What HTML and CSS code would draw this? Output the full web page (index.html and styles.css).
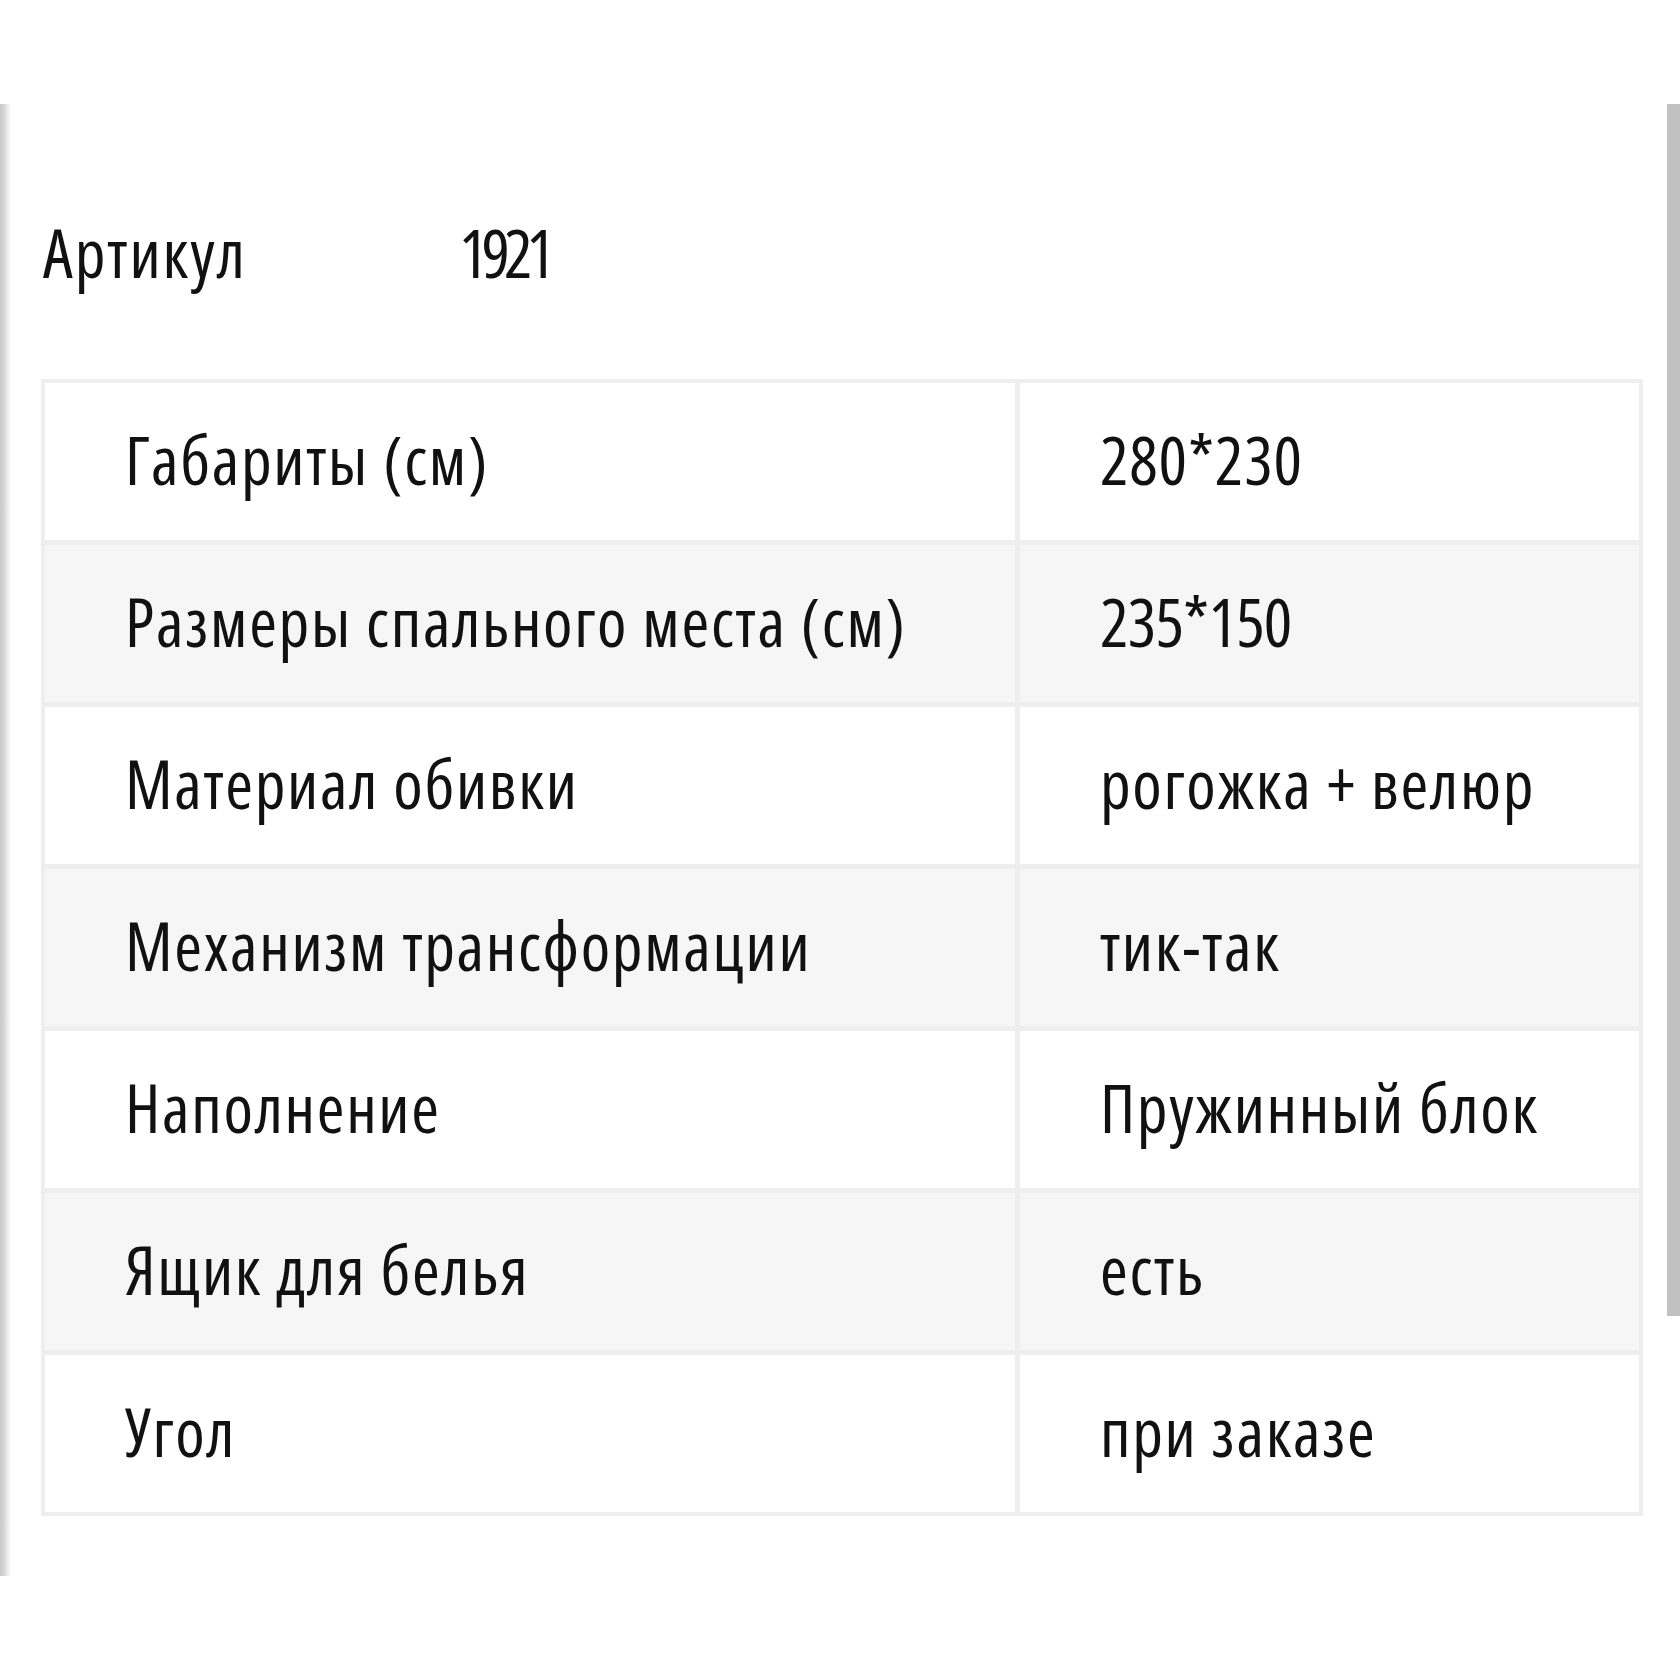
FILE: index.html
```html
<!DOCTYPE html>
<html lang="ru">
<head>
<meta charset="utf-8">
<title>Характеристики</title>
<link rel="stylesheet" href="styles.css">
</head>
<body>
<div class="edge-shadow"></div>
<div class="scrollbar"></div>
<main class="page">
  <div class="sku">
    <span class="sku-label">Артикул</span>
    <span class="sku-value">1921</span>
  </div>
  <div class="specs">
    <div class="cell">Габариты (см)</div>
    <div class="cell num">280*230</div>
    <div class="cell alt">Размеры спального места (см)</div>
    <div class="cell alt num tight">235*150</div>
    <div class="cell">Материал обивки</div>
    <div class="cell">рогожка + велюр</div>
    <div class="cell alt">Механизм трансформации</div>
    <div class="cell alt">тик-так</div>
    <div class="cell">Наполнение</div>
    <div class="cell">Пружинный блок</div>
    <div class="cell alt">Ящик для белья</div>
    <div class="cell alt">есть</div>
    <div class="cell">Угол</div>
    <div class="cell">при заказе</div>
  </div>
</main>
</body>
</html>
```
FILE: styles.css
```css
html, body {
  margin: 0;
  padding: 0;
  background: #ffffff;
}

body {
  font-family: "Open Sans", "Noto Sans", "Liberation Sans", sans-serif;
  font-stretch: 75%;
  font-weight: 500;
  font-size: 67px;
  letter-spacing: 1.7px;
  color: #111111;
}

.edge-shadow {
  position: absolute;
  left: 0;
  top: 104px;
  width: 11px;
  height: 1472px;
  background: linear-gradient(to right, #c9c9c9 0%, #d6d6d6 35%, #ededed 70%, #ffffff 100%);
}

.scrollbar {
  position: absolute;
  right: 0;
  top: 104px;
  width: 13px;
  height: 1212px;
  background: #c1c1c1;
}

.page {
  padding: 207px 37px 0 41px;
}

.sku {
  display: flex;
  align-items: baseline;
  line-height: 91px;
  margin-bottom: 81px;
  padding-left: 2px;
}

.sku-label {
  width: 416px;
  flex: none;
  letter-spacing: 2px;
}

.sku-value {
  letter-spacing: -6px;
}

.specs {
  display: grid;
  grid-template-columns: 970px 1fr;
  grid-auto-rows: 157px;
  gap: 5px;
  padding: 4px;
  background: #eeeeee;
}

.cell {
  display: flex;
  align-items: center;
  padding: 0 0 6px 80px;
  background: #ffffff;
  white-space: nowrap;
}

.cell.num {
  letter-spacing: 0.8px;
}

.cell.num.tight {
  letter-spacing: -0.8px;
}

.cell.alt {
  background: #f6f6f6;
}
```
